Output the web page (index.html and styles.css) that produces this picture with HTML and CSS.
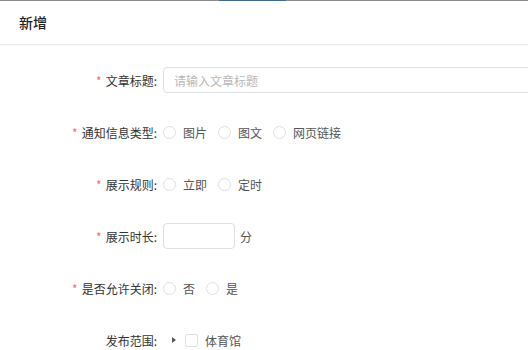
FILE: index.html
```html
<!DOCTYPE html>
<html lang="zh-CN">
<head>
    <meta charset="UTF-8">
    <title>新增</title>
    <link rel="stylesheet" href="styles.css">
</head>
<body>
    <div class="topbar"><span class="topbar-active"></span></div>

    <div class="dialog-header">新增</div>

    <form class="form">
        <div class="form-item">
            <label class="form-label"><span class="req">*</span>文章标题:</label>
            <div class="form-content">
                <input class="input input-long" type="text" placeholder="请输入文章标题">
            </div>
        </div>

        <div class="form-item">
            <label class="form-label"><span class="req">*</span>通知信息类型:</label>
            <div class="form-content">
                <label class="radio"><span class="radio-dot"></span>图片</label>
                <label class="radio"><span class="radio-dot"></span>图文</label>
                <label class="radio"><span class="radio-dot"></span>网页链接</label>
            </div>
        </div>

        <div class="form-item">
            <label class="form-label"><span class="req">*</span>展示规则:</label>
            <div class="form-content">
                <label class="radio"><span class="radio-dot"></span>立即</label>
                <label class="radio"><span class="radio-dot"></span>定时</label>
            </div>
        </div>

        <div class="form-item">
            <label class="form-label"><span class="req">*</span>展示时长:</label>
            <div class="form-content">
                <input class="input input-short" type="text">
                <span class="unit">分</span>
            </div>
        </div>

        <div class="form-item">
            <label class="form-label"><span class="req">*</span>是否允许关闭:</label>
            <div class="form-content">
                <label class="radio"><span class="radio-dot"></span>否</label>
                <label class="radio"><span class="radio-dot"></span>是</label>
            </div>
        </div>

        <div class="form-item">
            <label class="form-label">发布范围:</label>
            <div class="form-content">
                <span class="tree-arrow"></span>
                <label class="checkbox"><span class="checkbox-box"></span>体育馆</label>
            </div>
        </div>
    </form>
</body>
</html>
```

FILE: styles.css
```css
/* General styles */
body {
    margin: 0;
    font-family: "Noto Sans CJK SC", "Noto Sans", sans-serif;
    font-size: 12px;
    color: #333;
    background: #fff;
    overflow: hidden;
}

/* Top progress line */
.topbar {
    height: 1px;
    background: #8a8a8a;
    display: flex;
}

.topbar-active {
    width: 67px;
    margin-left: 219px;
    background: #3e6a90;
}

/* Header */
.dialog-header {
    height: 43px;
    line-height: 43px;
    padding-left: 19px;
    font-size: 14px;
    font-weight: 500;
    color: #222;
    border-bottom: 1px solid #ebebeb;
    box-shadow: 0 1px 2px rgba(0, 0, 0, 0.03);
}

/* Form */
.form {
    display: flex;
    flex-direction: column;
    gap: 26px;
    padding-top: 22px;
}

.form-item {
    display: flex;
    align-items: center;
    height: 26px;
}

.form-label {
    flex: 0 0 163px;
    text-align: right;
    padding-right: 6px;
    box-sizing: border-box;
    white-space: nowrap;
    color: #333;
}

.req {
    color: #f56c6c;
    margin-right: 4px;
}

.form-content {
    display: flex;
    align-items: center;
}

.input {
    flex-shrink: 0;
    height: 26px;
    box-sizing: border-box;
    border: 1px solid #dcdfe6;
    border-radius: 4px;
    padding: 0 10px;
    font-family: inherit;
    font-size: 12px;
    color: #333;
    outline: none;
}

.input::placeholder {
    color: #b8b8b8;
}

.input-long {
    width: 380px;
}

.input-short {
    width: 72px;
}

.unit {
    margin-left: 5px;
    color: #555;
}

/* Radio */
.radio {
    display: flex;
    align-items: center;
    margin-right: 11px;
    color: #555;
    white-space: nowrap;
}

.radio-dot {
    width: 11px;
    height: 11px;
    border: 1px solid #dcdfe6;
    border-radius: 50%;
    margin-right: 7px;
}

/* Tree checkbox */
.tree-arrow {
    width: 0;
    height: 0;
    border-left: 4px solid #555;
    border-top: 3px solid transparent;
    border-bottom: 3px solid transparent;
    margin: 0 9px 0 9px;
}

.checkbox {
    display: flex;
    align-items: center;
    color: #555;
    white-space: nowrap;
}

.checkbox-box {
    width: 11px;
    height: 11px;
    border: 1px solid #dcdfe6;
    border-radius: 2px;
    margin-right: 7px;
}
```
